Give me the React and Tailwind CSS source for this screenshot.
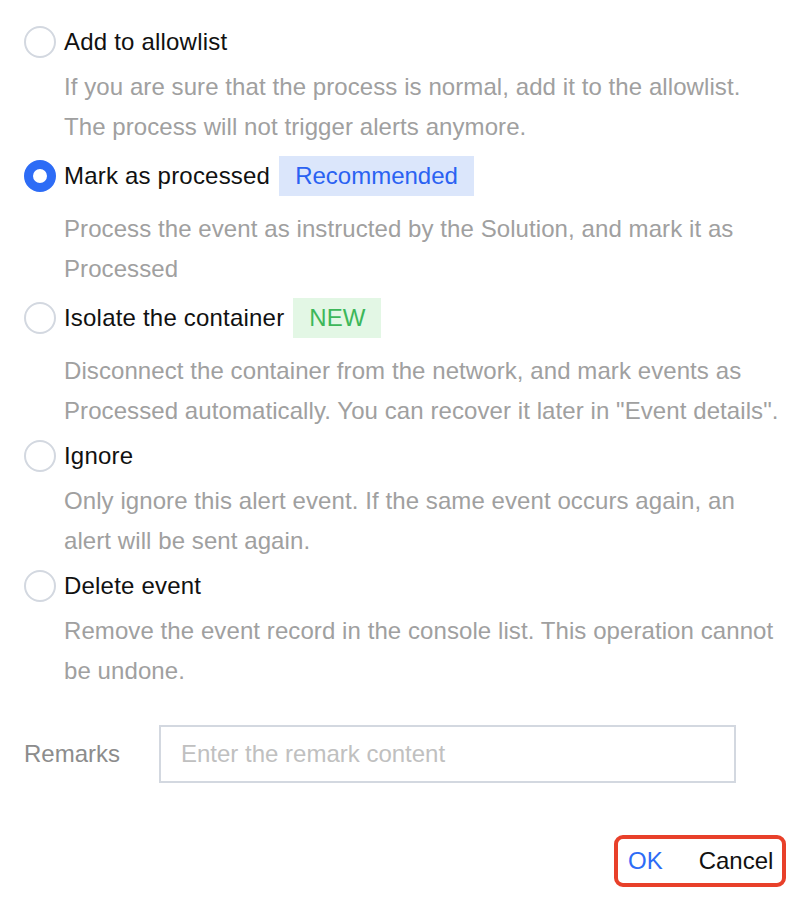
const options = [
  {
    title: "Add to allowlist",
    lines: [
      "If you are sure that the process is normal, add it to the allowlist.",
      "The process will not trigger alerts anymore.",
    ],
  },
  {
    title: "Mark as processed",
    checked: true,
    badge: { text: "Recommended", cls: "bg-[#dbe6fb] text-[#2a62f2]" },
    lines: [
      "Process the event as instructed by the Solution, and mark it as",
      "Processed",
    ],
  },
  {
    title: "Isolate the container",
    badge: { text: "NEW", cls: "bg-[#e3f7e5] text-[#3db75a]" },
    lines: [
      "Disconnect the container from the network, and mark events as",
      'Processed automatically. You can recover it later in "Event details".',
    ],
  },
  {
    title: "Ignore",
    lines: [
      "Only ignore this alert event. If the same event occurs again, an",
      "alert will be sent again.",
    ],
  },
  {
    title: "Delete event",
    lines: [
      "Remove the event record in the console list. This operation cannot",
      "be undone.",
    ],
  },
];

const Radio = ({ checked }) =>
  checked ? (
    <span className="w-[32px] h-[32px] rounded-full border-[9px] border-[#2d6cf6] bg-white shrink-0" />
  ) : (
    <span className="w-[32px] h-[32px] rounded-full border-2 border-[#d3d8e0] bg-white shrink-0" />
  );

const Option = ({ title, lines, checked, badge }) => (
  <div>
    <div className={`flex items-center ${badge ? "h-[40px]" : "h-[32px]"}`}>
      <Radio checked={checked} />
      <span className="ml-[8px] text-[24px] leading-[32px] tracking-[0.2px] text-[#111]">{title}</span>
      {badge && (
        <span className={`ml-[9px] h-[40px] px-[16px] flex items-center text-[24px] ${badge.cls}`}>
          {badge.text}
        </span>
      )}
    </div>
    <div className={`pl-[40px] ${badge ? "mt-[13px]" : "mt-[9px]"} text-[24px] leading-[40px] tracking-[0.08px] text-[#a0a0a0]`}>
      {lines.map((l) => (
        <div key={l} className="whitespace-nowrap">
          {l}
        </div>
      ))}
    </div>
  </div>
);

export default function App() {
  return (
    <div
      className="w-[806px] h-[904px] bg-white pl-[24px] pr-[20px] pt-[26px]"
      style={{ fontFamily: '"Liberation Sans", Arial, Helvetica, sans-serif' }}
    >
      <div className="flex flex-col gap-[9px]">
        {options.map((o) => (
          <Option key={o.title} {...o} />
        ))}
      </div>

      <div className="mt-[34px] flex items-center">
        <span className="w-[135px] text-[24px] text-[#8c8c8c]">Remarks</span>
        <div className="w-[577px] h-[58px] border-2 border-[#d3d8e0] flex items-center pl-[20px] text-[24px] text-[#c0c0c0]">
          Enter the remark content
        </div>
      </div>

      <div className="mt-[52px] flex justify-end">
        <div className="h-[52px] w-[172px] border-4 border-[#e8402a] rounded-[9px] flex items-center pl-[10px] text-[24px]">
          <span className="text-[#2d6cf6]">OK</span>
          <span className="ml-[36px] text-[#111]">Cancel</span>
        </div>
      </div>
    </div>
  );
}
